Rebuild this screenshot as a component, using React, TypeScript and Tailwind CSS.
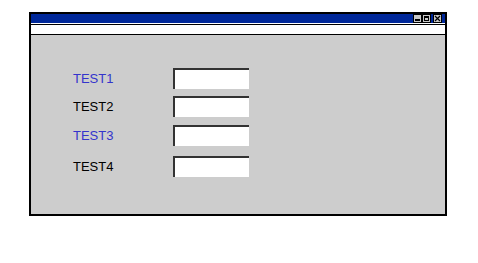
const rows = [
  { label: "TEST1", blue: true, mt: "mt-0" },
  { label: "TEST2", blue: false, mt: "mt-[7px]" },
  { label: "TEST3", blue: true, mt: "mt-[8px]" },
  { label: "TEST4", blue: false, mt: "mt-[10px]" },
]

function TitleButton({ kind }: { kind: "min" | "max" | "close" }) {
  return (
    <div className="w-[9px] h-[9px] bg-[#c8c8c8] border border-black flex items-center justify-center">
      {kind === "min" && <div className="w-[5px] h-[5px] border-b-2 border-black" />}
      {kind === "max" && <div className="w-[5px] h-[5px] border border-black border-t-2" />}
      {kind === "close" && (
        <svg width="7" height="7" viewBox="0 0 7 7">
          <path d="M1 1L6 6M6 1L1 6" stroke="black" strokeWidth="1.2" />
        </svg>
      )}
    </div>
  )
}

export default function App() {
  return (
    <div
      className="w-[478px] h-[263px] bg-white pt-[12px] pl-[29px]"
      style={{ fontFamily: '"Liberation Sans", Arial, sans-serif' }}
    >
      <div className="w-[418px] h-[204px] border-2 border-black flex flex-col">
        {/* title bar */}
        <div className="h-[9px] bg-[#00289a] flex items-center justify-end pr-[3px]">
          <div className="flex gap-[0px]">
            <TitleButton kind="min" />
            <TitleButton kind="max" />
          </div>
          <div className="ml-[2px]">
            <TitleButton kind="close" />
          </div>
        </div>
        <div className="h-[1px] bg-white" />
        <div className="h-[1px] bg-black" />
        {/* menu bar */}
        <div className="h-[9px] bg-white" />
        <div className="h-[1px] bg-black" />
        {/* body */}
        <div className="flex-1 bg-[#cdcdcd] pt-[33px] pl-[42px]">
          {rows.map((r) => (
            <div key={r.label} className={`flex items-center ${r.mt}`}>
              <span
                className={`w-[100px] text-[13px] leading-none ${
                  r.blue ? "text-[#3434cc]" : "text-black"
                }`}
              >
                {r.label}
              </span>
              <div className="w-[76px] h-[21px] bg-white border-t-2 border-l-2 border-[#333333]" />
            </div>
          ))}
        </div>
      </div>
    </div>
  )
}
